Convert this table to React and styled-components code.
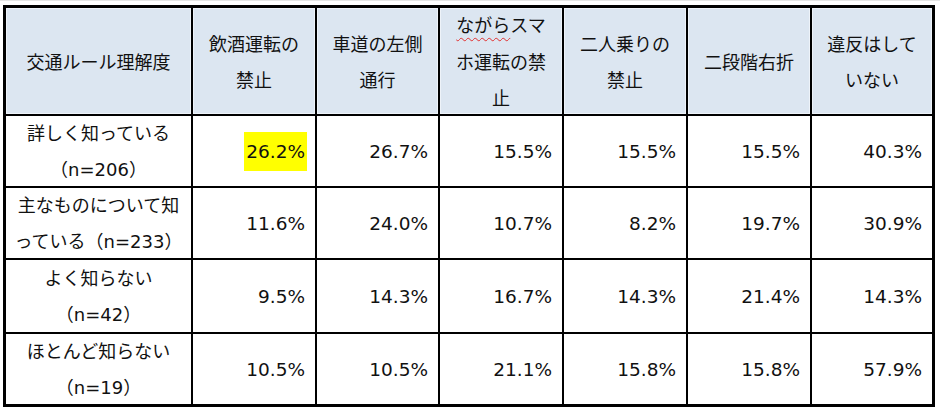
import React from "react";
import styled, { createGlobalStyle } from "styled-components";

const Global = createGlobalStyle`
  html, body { margin: 0; padding: 0; background: #fff; }
  body { width: 940px; height: 411px; overflow: hidden; }
`;

const Page = styled.div`
  width: 940px;
  height: 411px;
  box-sizing: border-box;
  padding: 4px 0 0 3px;
  border-top: 1px solid #e4e4e4;
`;

const Grid = styled.div`
  display: grid;
  grid-template-columns: 185px 122px 121px 122px 122px 122px 120px;
  grid-template-rows: 106px 70px 70px 72px 70px;
  gap: 2px;
  width: max-content;
  background: #000;
  border: 3px solid #000;
  font-family: "DejaVu Sans", "Noto Sans CJK JP", sans-serif;
  color: #111;
`;

const HeadCell = styled.div`
  background: #dce6f1;
  box-shadow: inset 0 0 0 1px #eef3f9;
  display: flex;
  align-items: center;
  justify-content: center;
  text-align: center;
  font-size: 18px;
  line-height: 36.5px;
  font-family: "Noto Sans CJK JP", sans-serif;
`;

const LabelCell = styled.div`
  background: #fff;
  display: flex;
  align-items: center;
  justify-content: center;
  text-align: center;
  font-size: 18px;
  line-height: 36.5px;
  white-space: nowrap;
  padding-top: 2px;
`;

const NumCell = styled.div`
  background: #fff;
  display: flex;
  align-items: center;
  justify-content: flex-end;
  padding-right: 10px;
  font-size: 18.5px;
`;

const Mark = styled.span`
  background: ${(p) => (p.$on ? "#ffff00" : "transparent")};
  line-height: 39px;
  padding: 0 2px;
  margin-right: -2px;
`;

const Squiggle = styled.span`
  text-decoration: underline wavy #e03030;
  text-decoration-thickness: 1px;
  text-underline-offset: 5px;
`;

const headers = [
  <>交通ルール理解度</>,
  <>飲酒運転の<br />禁止</>,
  <>車道の左側<br />通行</>,
  <><Squiggle>ながら</Squiggle>スマ<br />ホ運転の禁<br />止</>,
  <>二人乗りの<br />禁止</>,
  <>二段階右折</>,
  <>違反はして<br />いない</>,
];

const rows = [
  { label: <>詳しく知っている<br />（n=206）</>, values: ["26.2%", "26.7%", "15.5%", "15.5%", "15.5%", "40.3%"], mark: 0 },
  { label: <>主なものについて知<br />っている（n=233）</>, values: ["11.6%", "24.0%", "10.7%", "8.2%", "19.7%", "30.9%"] },
  { label: <>よく知らない<br />（n=42）</>, values: ["9.5%", "14.3%", "16.7%", "14.3%", "21.4%", "14.3%"] },
  { label: <>ほとんど知らない<br />（n=19）</>, values: ["10.5%", "10.5%", "21.1%", "15.8%", "15.8%", "57.9%"] },
];

export default function App() {
  return (
    <>
      <Global />
      <Page>
        <Grid>
          {headers.map((h, i) => (
            <HeadCell key={"h" + i}>
              <div>{h}</div>
            </HeadCell>
          ))}
          {rows.map((r, ri) => (
            <React.Fragment key={"r" + ri}>
              <LabelCell>
                <div>{r.label}</div>
              </LabelCell>
              {r.values.map((v, vi) => (
                <NumCell key={vi}>
                  <Mark $on={r.mark === vi}>{v}</Mark>
                </NumCell>
              ))}
            </React.Fragment>
          ))}
        </Grid>
      </Page>
    </>
  );
}
